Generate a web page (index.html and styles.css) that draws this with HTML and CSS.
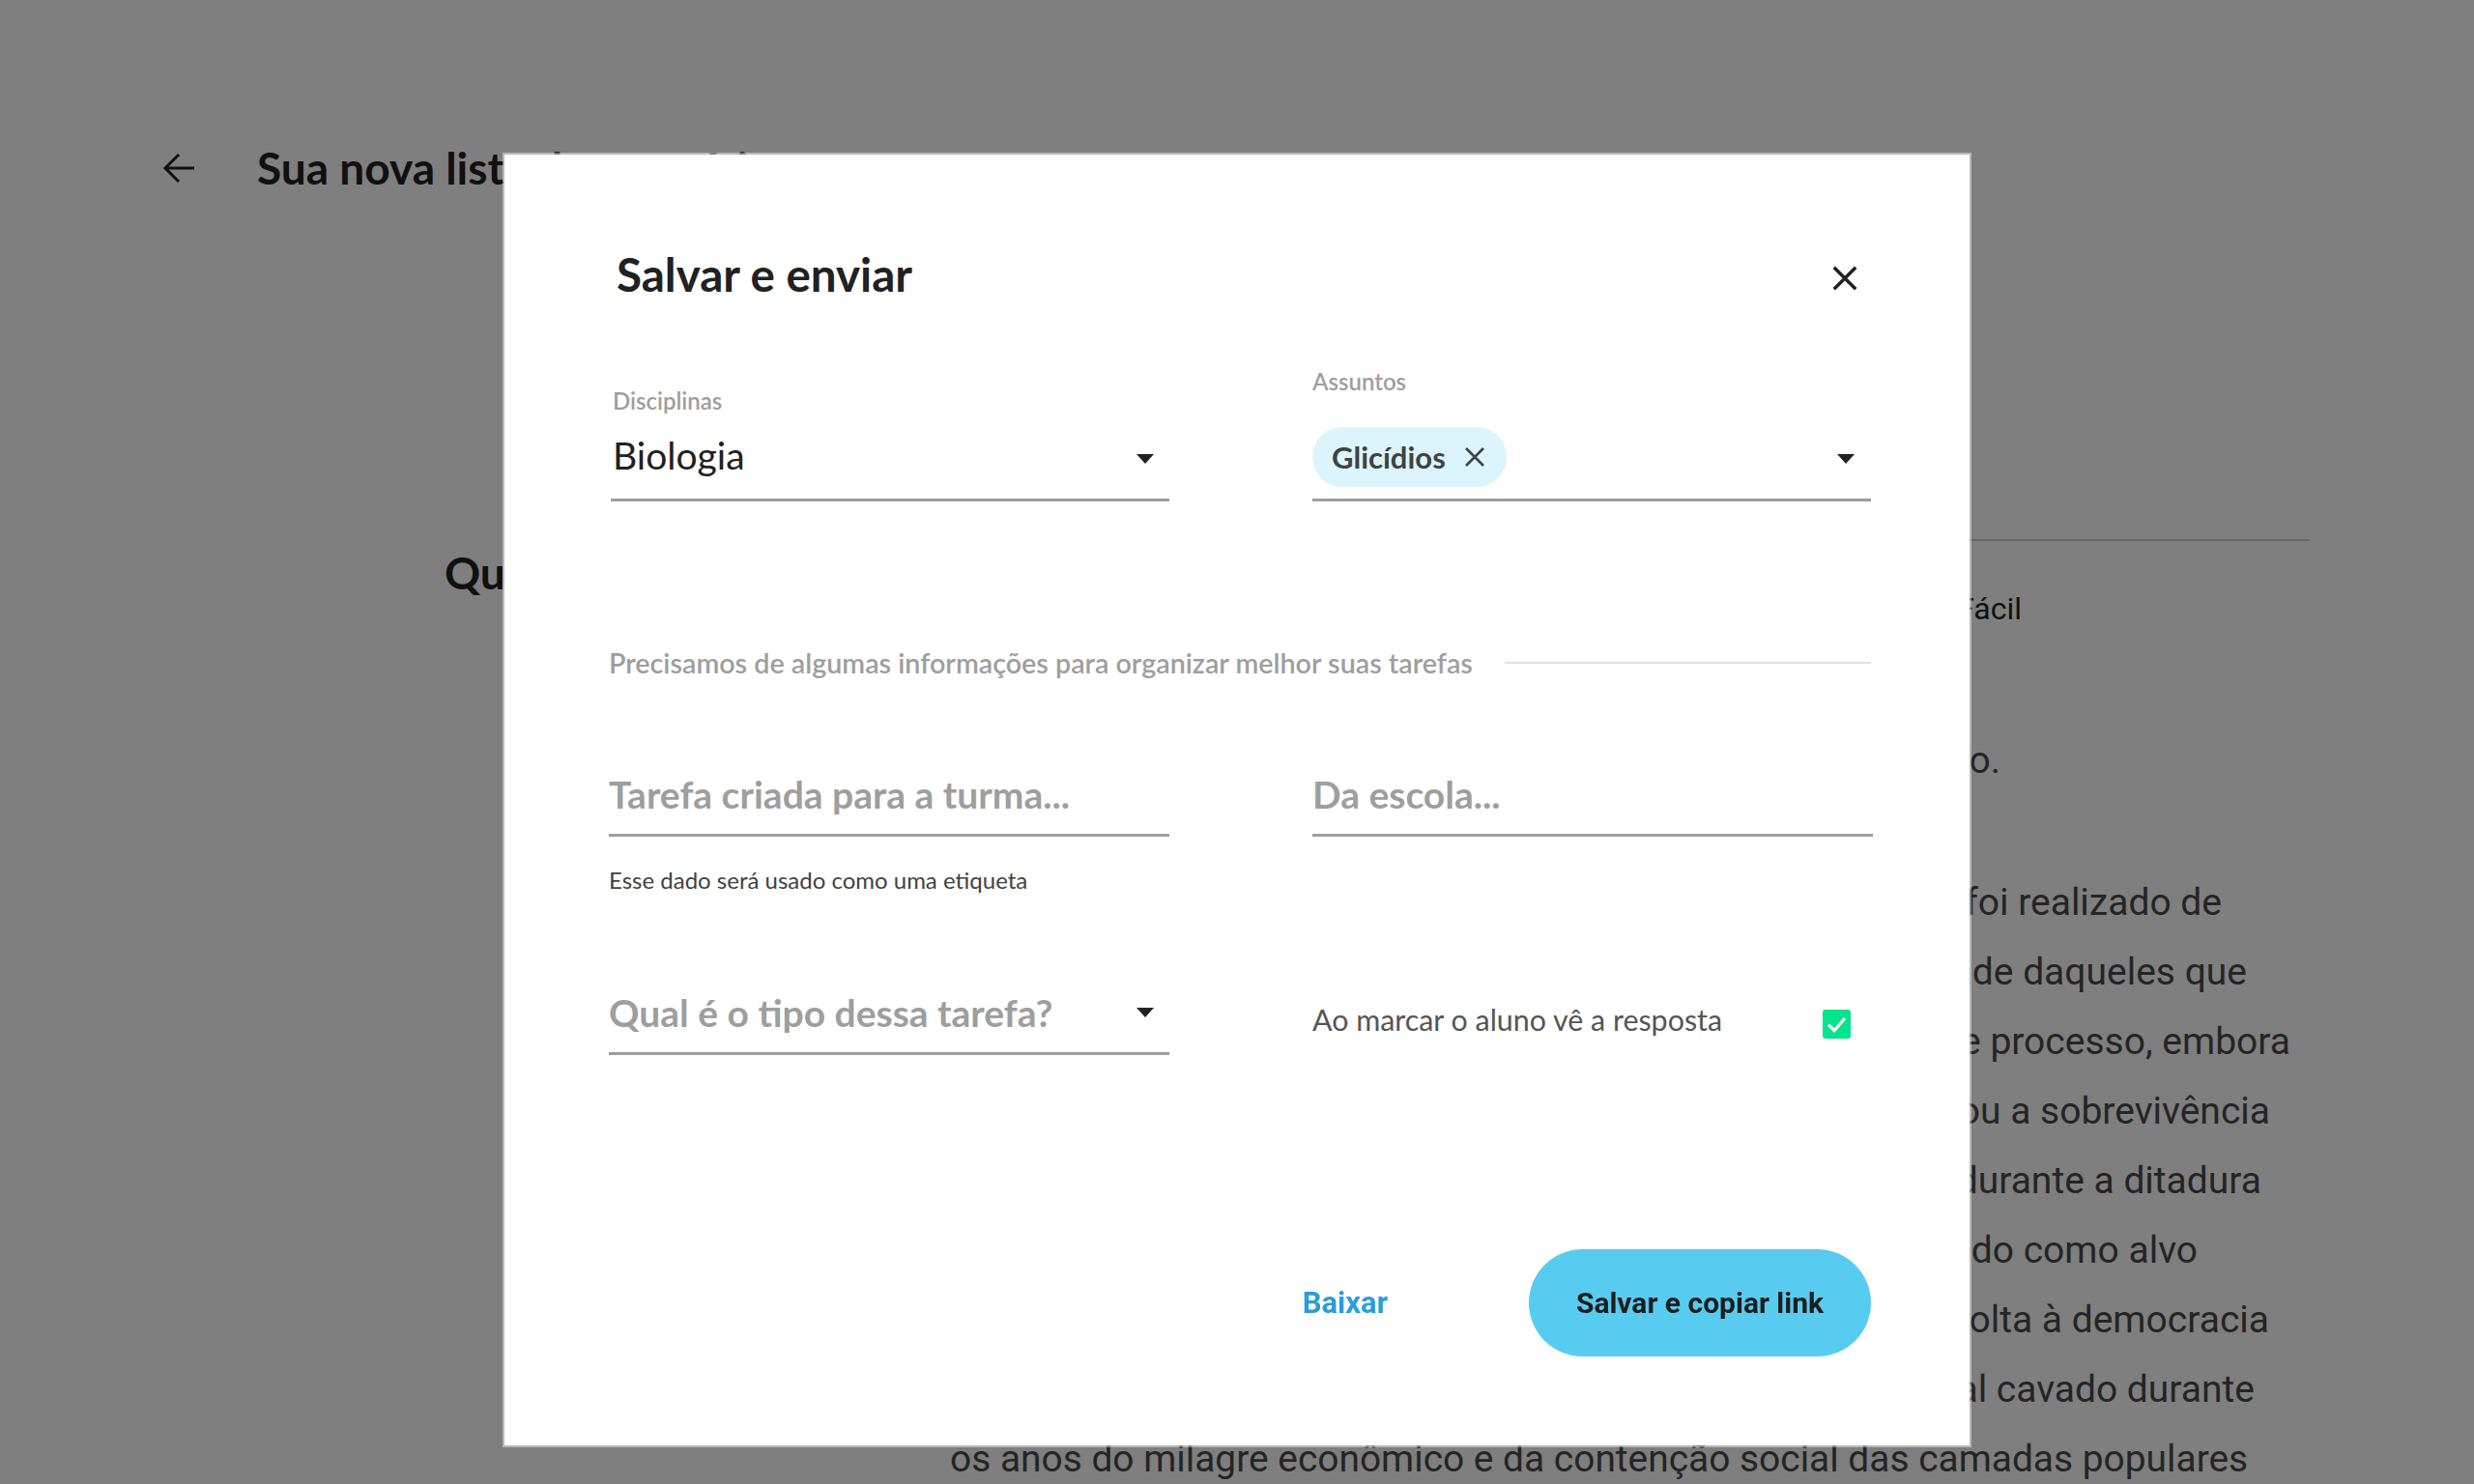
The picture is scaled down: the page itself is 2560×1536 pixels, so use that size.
FILE: index.html
```html
<!DOCTYPE html>
<html lang="pt-BR">
<head>
<meta charset="utf-8">
<title>Salvar e enviar</title>
<link rel="stylesheet" href="styles.css">
</head>
<body>
<div class="page">
  <header class="page-header">
    <svg class="back" viewBox="0 0 34 34" aria-hidden="true"><path d="M33 17H3M17 3L3 17L17 31"/></svg>
    <h1 class="page-title">Sua nova lista de exercícios</h1>
  </header>
  <main class="content">
    <div class="q-left">
      <h2 class="q-title">Questão 1</h2>
    </div>
    <div class="q-right">
      <div class="q-rule"></div>
      <div class="q-meta"><span class="meta-val">Fácil</span></div>
      <div class="ln lead">sto.</div>
      <div class="para">
        <div class="ln ln-1">sil foi realizado de</div>
        <div class="ln ln-2">ntade daqueles que</div>
        <div class="ln ln-3">sse processo, embora</div>
        <div class="ln ln-4">urou a sobrevivência</div>
        <div class="ln ln-5">s durante a ditadura</div>
        <div class="ln ln-6">omado como alvo</div>
        <div class="ln ln-7">à volta à democracia</div>
        <div class="ln ln-8">cial cavado durante</div>
        <div class="ln ln-last">os anos do milagre econômico e da contenção social das camadas populares</div>
      </div>
    </div>
  </main>
</div>

<div class="overlay"></div>

<section class="modal" role="dialog" aria-labelledby="modal-title">
  <div class="modal-head">
    <h2 class="modal-title" id="modal-title">Salvar e enviar</h2>
    <button class="close" aria-label="Fechar"><svg viewBox="0 0 24 24"><path d="M3 3L21 21M21 3L3 21"/></svg></button>
  </div>

  <div class="row row-top">
    <div class="field">
      <label class="label label-select">Disciplinas</label>
      <div class="control">
        <span class="value">Biologia</span>
        <span class="caret"></span>
      </div>
    </div>
    <div class="field">
      <label class="label label-chips">Assuntos</label>
      <div class="control">
        <span class="chip">Glicídios<svg class="chip-x" viewBox="0 0 24 24"><path d="M3 3L21 21M21 3L3 21"/></svg></span>
        <span class="caret caret-r"></span>
      </div>
    </div>
  </div>

  <div class="section">
    <span class="section-text">Precisamos de algumas informações para organizar melhor suas tarefas</span>
    <span class="section-line"></span>
  </div>

  <div class="row row-mid">
    <div class="field">
      <div class="control"><span class="placeholder">Tarefa criada para a turma...</span></div>
      <p class="helper">Esse dado será usado como uma etiqueta</p>
    </div>
    <div class="field">
      <div class="control control-wide"><span class="placeholder">Da escola...</span></div>
    </div>
  </div>

  <div class="row row-bottom">
    <div class="field">
      <div class="control"><span class="placeholder">Qual é o tipo dessa tarefa?</span><span class="caret"></span></div>
    </div>
    <div class="check-row">
      <span class="check-label">Ao marcar o aluno vê a resposta</span>
      <span class="checkbox"><svg viewBox="0 0 24 24"><path d="M5 12.5L10 17.5L19 7"/></svg></span>
    </div>
  </div>

  <div class="actions">
    <button class="btn-text">Baixar</button>
    <button class="btn-primary">Salvar e copiar link</button>
  </div>
</section>
</body>
</html>
```

FILE: styles.css
```css
* { box-sizing: border-box; margin: 0; padding: 0; }
html, body { width: 2560px; height: 1536px; overflow: hidden; }
body {
  position: relative;
  background: #ffffff;
  font-family: Lato, "Noto Sans", sans-serif;
  color: #212121;
}

/* ---------- background page ---------- */
.page { padding-top: 146px; }
.page-header {
  display: flex;
  align-items: center;
  height: 56px;
  padding-left: 168px;
  gap: 64px;
}
.back { width: 34px; height: 34px; fill: none; stroke: #222; stroke-width: 3; }
.page-title { font-size: 46px; font-weight: 700; line-height: 56px; color: #222; white-space: nowrap; }

.content {
  margin-top: 356px;
  margin-left: 460px;
  display: grid;
  grid-template-columns: 523px 1407px;
}
.q-title { padding-top: 7px; font-size: 46px; font-weight: 700; line-height: 56px; color: #222; white-space: nowrap; }
.q-rule { height: 2px; background: #cccccc; }
.q-right { font-family: Roboto, "Liberation Sans", sans-serif; font-size: 39px; line-height: 72px; color: #4a4a4a; }
.q-meta {
  display: flex;
  justify-content: flex-end;
  margin-top: 34px;
  padding-right: 298px;
  font-size: 32px;
  color: #222;
}
.ln { display: flex; justify-content: flex-end; white-space: nowrap; }
.lead { margin-top: 85px; padding-right: 320px; }
.para { margin-top: 75px; }
.ln-1 { padding-right: 91px; }
.ln-2 { padding-right: 65px; }
.ln-3 { padding-right: 20px; }
.ln-4 { padding-right: 41px; }
.ln-5 { padding-right: 50px; }
.ln-6 { padding-right: 116px; }
.ln-7 { padding-right: 42px; }
.ln-8 { padding-right: 57px; }
.ln-last { justify-content: flex-start; font-size: 38.9px; }

.overlay { position: fixed; inset: 0; background: rgba(0, 0, 0, 0.5); }

/* ---------- modal ---------- */
.modal {
  position: absolute;
  top: 160px;
  left: 522px;
  width: 1516px;
  padding: 96px 102px 92px 110px;
  background: #ffffff;
  outline: 2px solid rgba(255, 255, 255, 0.45);
}
.modal-head {
  display: flex;
  align-items: center;
  justify-content: space-between;
  height: 56px;
}
.modal-title { padding-left: 6px; font-size: 47.5px; font-weight: 700; line-height: 56px; color: #212121; }
.close {
  width: 30px;
  height: 30px;
  margin-top: 8px;
  margin-right: 12px;
  border: 0;
  background: none;
  display: flex;
}
.close svg { width: 30px; height: 30px; fill: none; stroke: #212121; stroke-width: 2.8; }

.row {
  display: grid;
  grid-template-columns: 578px 578px;
  column-gap: 148px;
}
.row-top { margin-top: 69px; align-items: end; }
.row-mid { margin-top: 89px; align-items: start; }
.row-bottom { margin-top: 92px; align-items: start; }

.label { display: block; font-size: 24px; font-weight: 600; line-height: 28px; color: #9e9e9e; }
.label-select { margin-bottom: 15px; padding-left: 2px; }
.label-chips { margin-bottom: 35px; }

.control {
  display: flex;
  align-items: center;
  justify-content: space-between;
  height: 75px;
  padding-bottom: 10px;
  border-bottom: 3px solid #9e9e9e;
}
.control-wide { margin-right: -2px; }
.value { padding-left: 2px; padding-bottom: 8px; font-size: 39px; font-weight: 400; color: #212121; }
.placeholder { font-size: 39px; font-weight: 700; color: #9e9e9e; }
.caret {
  width: 0;
  height: 0;
  margin-right: 16px;
  border-left: 9px solid transparent;
  border-right: 9px solid transparent;
  border-top: 10px solid #212121;
}
.caret-r { margin-right: 17px; }

.chip {
  display: flex;
  align-items: center;
  gap: 18px;
  height: 62px;
  margin-bottom: 4px;
  padding: 0 21px 0 20px;
  border-radius: 31px;
  background: #dcf5fc;
  font-size: 31px;
  font-weight: 700;
  color: #424242;
}
.chip-x { width: 24px; height: 24px; fill: none; stroke: #424242; stroke-width: 2.6; }

.section {
  display: flex;
  align-items: center;
  margin-top: 151px;
  margin-left: -2px;
  height: 32px;
}
.section-text { font-size: 28.7px; font-weight: 600; line-height: 32px; color: #9e9e9e; white-space: nowrap; }
.section-line { flex: 1; height: 2px; margin-left: 33px; background: #e0e0e0; }

.row-mid .field:first-child, .row-bottom .field { margin-left: -2px; }
.helper { margin-top: 31px; font-size: 24px; font-weight: 400; line-height: 28px; color: #424242; }

.check-row {
  display: flex;
  align-items: center;
  justify-content: space-between;
  height: 62px;
  margin-top: 7px;
}
.check-label { font-size: 30.4px; font-weight: 400; color: #555555; }
.checkbox {
  display: flex;
  width: 29px;
  height: 30px;
  margin-top: 10px;
  margin-right: 21px;
  border-radius: 3px;
  background: #04e38d;
}
.checkbox svg { width: 29px; height: 30px; fill: none; stroke: #ffffff; stroke-width: 2.6; }

.actions {
  display: flex;
  align-items: center;
  justify-content: flex-end;
  margin-top: 201px;
}
.btn-text {
  margin-right: 146px;
  border: 0;
  background: none;
  font-family: Roboto, "Liberation Sans", sans-serif;
  font-size: 31px;
  font-weight: 700;
  color: #2b9ddb;
}
.btn-primary {
  width: 354px;
  height: 111px;
  border: 0;
  border-radius: 56px;
  background: #58cbf1;
  font-family: Roboto, "Liberation Sans", sans-serif;
  font-size: 30px;
  font-weight: 700;
  color: #1e1e1e;
}
```
